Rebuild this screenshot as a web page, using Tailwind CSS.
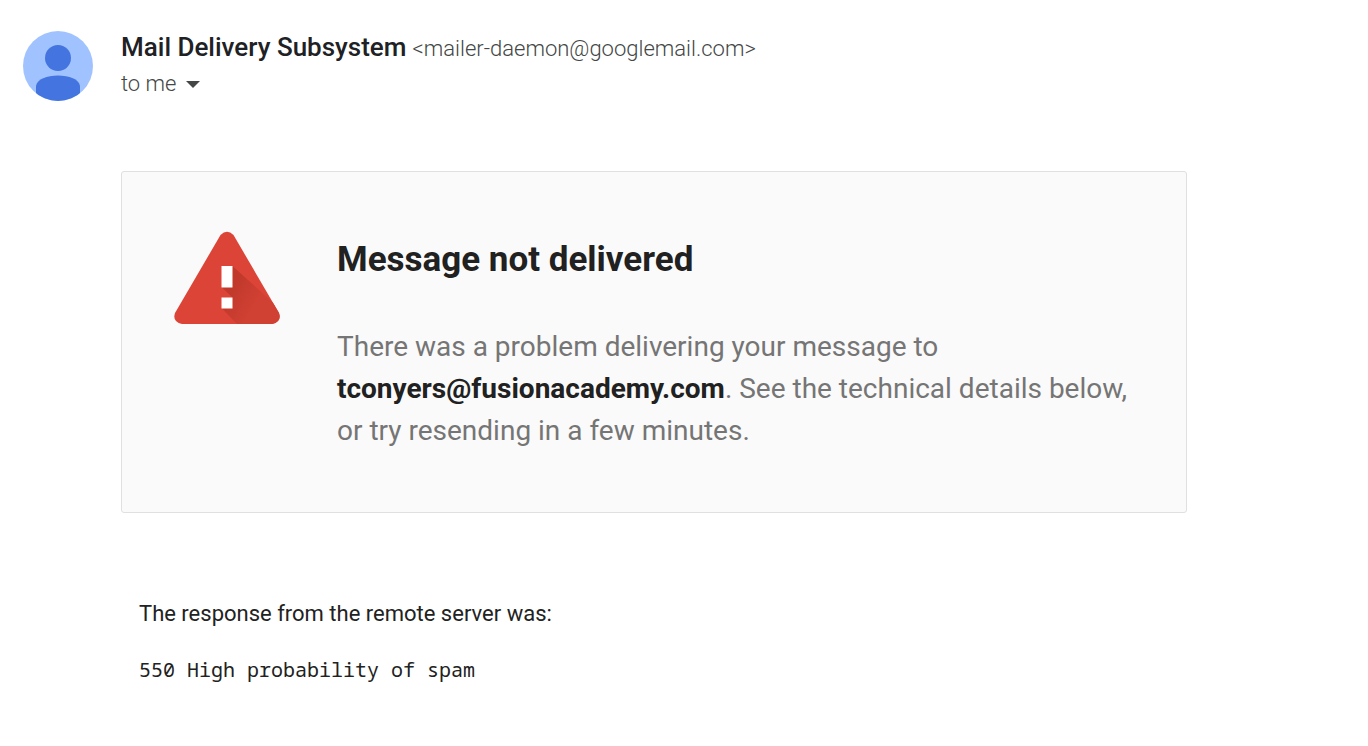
<!DOCTYPE html>
<html lang="en">
<head>
<meta charset="utf-8">
<title>Mail Delivery Subsystem</title>
<script src="https://cdn.jsdelivr.net/npm/@tailwindcss/browser@4"></script>
</head>
<body class="bg-white font-['Roboto',sans-serif] text-[#202124]">
<header class="flex gap-7 pl-[23px] pt-[31px]">
  <svg class="size-[70px] shrink-0" viewBox="0 0 70 70" role="img" aria-label="Sender avatar">
    <defs><clipPath id="disc"><circle cx="35" cy="35" r="35"/></clipPath></defs>
    <g clip-path="url(#disc)">
      <rect width="70" height="70" fill="#a0c3ff"/>
      <circle cx="35" cy="27" r="13" fill="#4374e0"/>
      <path d="M13 70V55C14 48 24 44.500 35 44.500S56 48 57 55V70Z" fill="#4374e0"/>
    </g>
  </svg>
  <div>
    <div class="flex items-baseline gap-[6px] leading-[32px]">
      <h1 class="text-[26px] font-medium">Mail Delivery Subsystem</h1>
      <span class="text-[22px] font-light text-[#444746]">&lt;mailer-daemon@googlemail.com&gt;</span>
    </div>
    <button class="flex items-center gap-[10px] text-[22px] font-light leading-[38px] text-[#444746]" type="button">to me
      <svg class="h-2 w-[14px]" viewBox="0 0 14 8" aria-hidden="true"><path d="M0 1H14L7 8Z" fill="#444746"/></svg>
    </button>
  </div>
</header>
<main class="ml-[121px] mr-[181px] mt-[68px]">
  <section class="flex gap-[57px] rounded-[3px] border border-[#e0e0e0] bg-[#fafafa] pb-[60px] pl-[52px] pr-[48px] pt-[59px]">
    <svg class="h-[94px] w-[106px] shrink-0" viewBox="0 0 106 94" role="img" aria-label="Error">
      <defs>
        <clipPath id="tri"><path d="M46.500 4Q53-2.500 59.500 4L105 82Q108 91 98 93H8Q-2 91 1 82Z"/></clipPath>
        <linearGradient id="shade" gradientUnits="userSpaceOnUse" x1="55" y1="60" x2="80" y2="75"><stop stop-color="#c0392b"/><stop offset="1" stop-color="#d04033"/></linearGradient>
      </defs>
      <g clip-path="url(#tri)">
        <rect width="106" height="94" fill="#db4437"/>
        <path d="M58.500 35L106 78V94H64L47.500 77L58 66L47.500 56Z" fill="url(#shade)"/>
        <path d="M47.500 35h11v21.500h-11ZM47.500 66.500h11v11h-11Z" fill="#fff"/>
      </g>
    </svg>
    <div class="pt-px">
      <h2 class="text-[35px] font-bold leading-[56px] text-[#212121]">Message not delivered</h2>
      <p class="mt-[38px] text-[28px] leading-[42px] text-[#757575]">There was a problem delivering your message to <b class="font-bold text-[#212121]">tconyers@fusionacademy.com</b>. See the technical details below, or try resending in a few minutes.</p>
    </div>
  </section>
  <section class="pl-[18px] pt-[85px] text-[#222]">
    <p class="text-[22px] leading-[32px]">The response from the remote server was:</p>
    <pre class="mt-[25px] font-['Noto_Sans_Mono','DejaVu_Sans_Mono',monospace] text-[20px] leading-[30px]">550 High probability of spam</pre>
  </section>
</main>
</body>
</html>
